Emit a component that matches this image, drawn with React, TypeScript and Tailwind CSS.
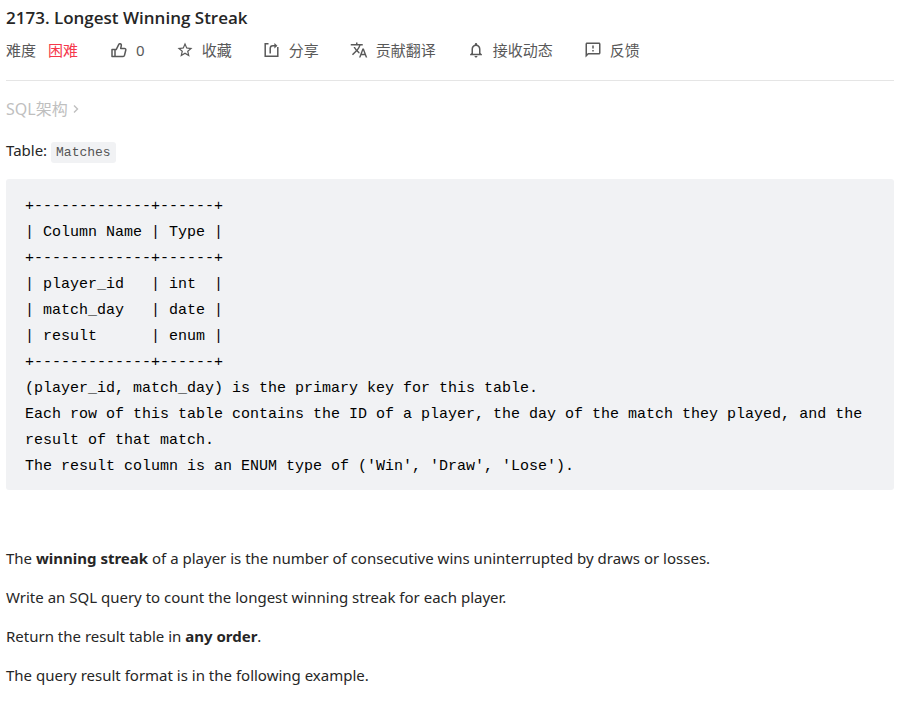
import type { ReactNode } from 'react';
import { MdNotificationsNone, MdOutlineFeedback, MdStarOutline, MdTranslate } from 'react-icons/md';

const schema = `+-------------+------+
| Column Name | Type |
+-------------+------+
| player_id   | int  |
| match_day   | date |
| result      | enum |
+-------------+------+
(player_id, match_day) is the primary key for this table.
Each row of this table contains the ID of a player, the day of the match they played, and the result of that match.
The result column is an ENUM type of ('Win', 'Draw', 'Lose').`;

function ThumbIcon() {
  return (
    <svg width="18" height="18" viewBox="0 0 18 18" fill="none" stroke="currentColor" strokeWidth="1.5" strokeLinejoin="round">
      <path d="M5 8.6h1.2l2.6-5.2c.3-.6.7-.8 1.2-.7 1 .2 1.5 1 1.3 2l-.6 2.7h3.8c.9 0 1.5.7 1.3 1.6l-1.3 5.3c-.2.7-.7 1.1-1.4 1.1H2V8.6h3v6.8" />
    </svg>
  );
}

function ShareIcon() {
  return (
    <svg width="18" height="18" viewBox="0 0 18 18" fill="none" stroke="currentColor" strokeWidth="1.5">
      <path d="M5.5 2.7H2.2v12.6h12.6V6" />
      <path d="M7.2 12.5V7.4c0-1.7.9-2.6 2.6-2.6h3" />
      <path d="m11.4 2 3 2.8-3 2.8z" fill="currentColor" stroke="none" />
    </svg>
  );
}

function Action({ icon, label }: { icon: ReactNode; label: string }) {
  return (
    <button type="button" className="flex items-center gap-2">
      {icon}
      <span>{label}</span>
    </button>
  );
}

export default function App() {
  return (
    <main className="pr-[5px] pl-[6px] pt-[5px] text-[15px] leading-6 text-[#262626] font-['Noto_Sans','Noto_Sans_CJK_SC',sans-serif]">
      <h1 className="text-[17px] leading-[26px] font-semibold font-['Open_Sans',sans-serif]">2173. Longest Winning Streak</h1>

      <div className="mt-[7px] flex items-center gap-[31px] border-b border-[#e5e5e5] pb-[18px] text-[#595959]">
        <div className="flex gap-3 pr-px">
          <span>难度</span>
          <span className="text-[#f5384b]">困难</span>
        </div>
        <Action icon={<ThumbIcon />} label="0" />
        <Action icon={<MdStarOutline size={18} />} label="收藏" />
        <Action icon={<ShareIcon />} label="分享" />
        <Action icon={<MdTranslate size={18} />} label="贡献翻译" />
        <Action icon={<MdNotificationsNone size={18} />} label="接收动态" />
        <Action icon={<MdOutlineFeedback size={18} />} label="反馈" />
      </div>

      <button type="button" className="mt-4 flex items-center gap-1 text-base text-[#bfbfbf]">
        <span>SQL架构</span>
        <svg width="8" height="10" viewBox="0 0 8 10" fill="none" stroke="currentColor" strokeWidth="1.4">
          <path d="m2 1.5 3.5 3.5L2 8.5" />
        </svg>
      </button>

      <p className="mt-[17px]">
        Table:{' '}
        <code className="rounded-[3px] bg-[#f1f2f4] px-[5px] py-[3px] text-[13px] text-[#555] font-['Liberation_Mono',monospace]">
          Matches
        </code>
      </p>

      <pre className="mt-[14px] rounded-[3px] bg-[#f1f2f4] pt-[15px] pr-[18px] pb-[10px] pl-[19px] text-[15px] leading-[26px] whitespace-pre-wrap text-black font-['Liberation_Mono',monospace]">
        {schema}
      </pre>

      <div className="mt-14 space-y-[15px]">
        <p>
          The <strong>winning streak</strong> of a player is the number of consecutive wins uninterrupted by draws or losses.
        </p>
        <p>Write an SQL query to count the longest winning streak for each player.</p>
        <p>
          Return the result table in <strong>any order</strong>.
        </p>
        <p>The query result format is in the following example.</p>
      </div>
    </main>
  );
}
